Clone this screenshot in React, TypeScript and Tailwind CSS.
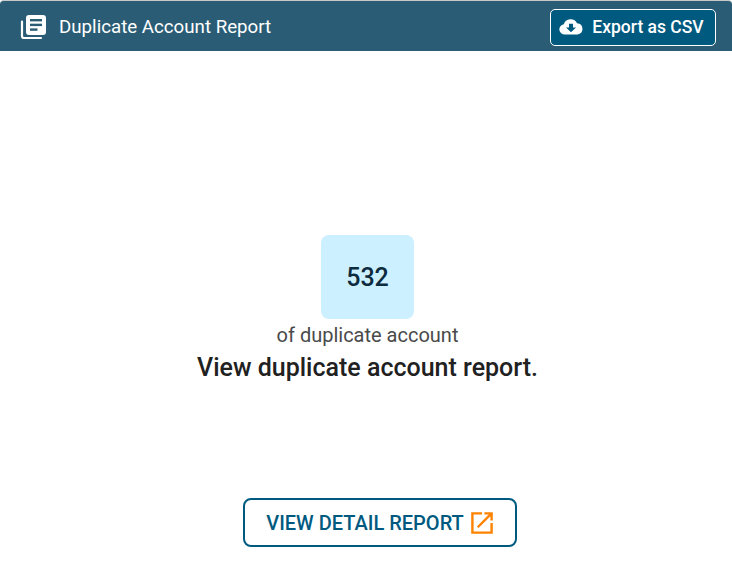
import React from "react";

export default function App() {
  return (
    <div className="h-[562px] w-[732px] overflow-hidden bg-white font-['Roboto',sans-serif] flex flex-col">
      <header className="h-[51px] shrink-0 bg-[#2a5d75] rounded-t-[4px] border-t border-[#c8c8c8] flex items-center justify-between pl-[20px] pr-[16px]">
        <div className="flex items-center gap-[11px] mt-[1px]">
          <svg width="28" height="26" viewBox="0 0 28 26" fill="none">
            <path d="M2 7.5V22a2 2 0 0 0 2 2h17" stroke="white" strokeWidth="2.2" strokeLinecap="round" />
            <rect x="6" y="1" width="20" height="20" rx="3" fill="white" />
            <rect x="10" y="5" width="12" height="2.4" fill="#2a5d75" />
            <rect x="10" y="9.7" width="12" height="2.4" fill="#2a5d75" />
            <rect x="10" y="14.4" width="7.5" height="2.4" fill="#2a5d75" />
          </svg>
          <span className="mt-[1px] text-[18.72px] leading-none text-white">Duplicate Account Report</span>
        </div>
        <button className="h-[37px] w-[166px] mt-[2px] pr-[3px] rounded-[5px] border border-white bg-[#005a80] flex items-center justify-center gap-[9px] text-white text-[17.5px] font-medium">
          <svg width="24" height="16" viewBox="0 0 24 17" preserveAspectRatio="none">
            <path d="M6 16.5a5.5 5.5 0 0 1-1.2-10.9A7 7 0 0 1 18 4.6a6 6 0 0 1 .4 11.9Z" fill="white" />
            <path d="M10 5h4v4h3l-5 5-5-5h3Z" fill="#005a80" />
          </svg>
          Export as CSV
        </button>
      </header>
      <main className="flex-1 w-[735px] flex flex-col items-center">
        <div className="mt-[184px] pt-[1px] h-[84px] w-[93px] rounded-[8px] bg-[#ccf0ff] flex items-center justify-center text-[25px] font-medium text-[#0d2b3e]">
          532
        </div>
        <p className="mt-[4px] text-[20px] leading-[24px] text-[#4a4a4a]">of duplicate account</p>
        <p className="mt-[5px] text-[25px] leading-[32px] font-medium text-[#212121]">View duplicate account report.</p>
        <button className="mt-[114px] ml-[25px] h-[49px] w-[274px] rounded-[8px] border-2 border-[#005a80] bg-white flex items-center justify-center gap-[6px] text-[20px] font-medium text-[#005a80]">
          VIEW DETAIL REPORT
          <svg width="24" height="24" viewBox="2 2 20 20" fill="#ff8200">
            <path d="M3 3h9v2H5v14h14v-7h2v9H3z" />
            <path d="M14 3v2h3.59l-9.83 9.83 1.41 1.41L19 6.41V10h2V3z" />
          </svg>
        </button>
      </main>
    </div>
  );
}
